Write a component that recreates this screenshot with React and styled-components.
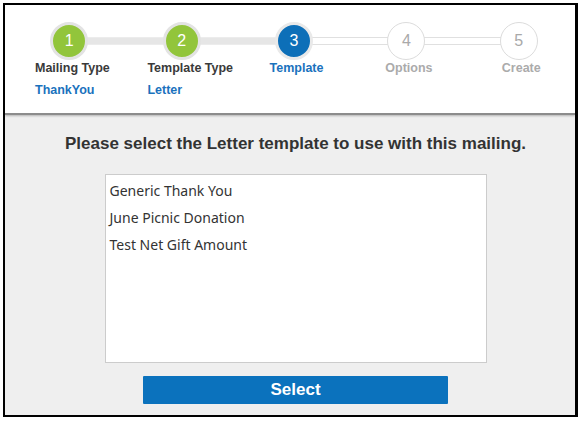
import React from "react";
import styled, { createGlobalStyle, css } from "styled-components";

const GlobalStyle = createGlobalStyle`
  html, body {
    margin: 0;
    padding: 0;
    background: #ffffff;
  }
  body {
    font-family: "Liberation Sans", Arial, sans-serif;
  }
`;

const Frame = styled.div`
  margin: 3px 0 0 3px;
  width: 575px;
  height: 414px;
  box-sizing: border-box;
  border: 2px solid #000;
  border-right-width: 3px;
  display: flex;
  flex-direction: column;
  background: #efefef;
`;

const Header = styled.div`
  height: 110px;
  flex-shrink: 0;
  box-sizing: border-box;
  padding: 17px 0 0 8px;
  background: #fff;
  display: grid;
  grid-template-columns: repeat(5, 1fr);
  border-bottom: 2px solid #8c8c8c;
  box-shadow: 0 1px 2px rgba(0, 0, 0, 0.25);
  position: relative;
  z-index: 1;
`;

const Step = styled.div`
  position: relative;
  display: flex;
  flex-direction: column;
  align-items: center;
`;

const Connector = styled.span`
  position: absolute;
  top: 15px;
  right: 50%;
  width: 100%;
  height: 8px;
  box-sizing: border-box;
  ${(p) =>
    p.$done
      ? css`
          background: #e6e6e6;
          border-top: 1px solid #ececec;
          border-bottom: 1px solid #ececec;
        `
      : css`
          background: #fff;
          border-top: 1px solid #e0e0e0;
          border-bottom: 1px solid #e0e0e0;
        `}
`;

const circleColors = {
  done: css`
    background: #92c53b;
    border: 3px solid #e3e3e3;
    color: #fff;
  `,
  current: css`
    background: #0d6fb8;
    border: 3px solid #e9e9e9;
    color: #fff;
  `,
  todo: css`
    background: #fff;
    border: 1.5px solid #dcdcdc;
    color: #a9a9a9;
  `,
};

const Circle = styled.div`
  position: relative;
  z-index: 1;
  width: 38px;
  height: 38px;
  box-sizing: border-box;
  border-radius: 50%;
  display: flex;
  align-items: center;
  justify-content: center;
  font-size: 16px;
  ${(p) => circleColors[p.$state]}
`;

// captions with a chosen value sit left-aligned under the circle
const Caption = styled.div`
  align-self: ${(p) => (p.$left ? "flex-start" : "center")};
  margin-left: ${(p) => (p.$left ? "22px" : "5px")};
  display: flex;
  flex-direction: column;
  align-items: flex-start;
`;

const Label = styled.div`
  font-size: 12.5px;
  font-weight: bold;
  line-height: 16px;
  white-space: nowrap;
  color: ${(p) =>
    p.$state === "current" ? "#1a72bd" : p.$state === "todo" ? "#ababab" : "#3a3a3a"};
`;

const Value = styled.div`
  margin-top: 6px;
  font-size: 12.5px;
  font-weight: bold;
  line-height: 16px;
  color: #1a72bd;
`;

const Content = styled.div`
  flex: 1;
  display: flex;
  flex-direction: column;
  align-items: center;
  padding: 19px 0 0 11px;
`;

const Heading = styled.h2`
  margin: 0;
  font-size: 17px;
  line-height: 20px;
  font-weight: bold;
  color: #333;
`;

const ListBox = styled.ul`
  list-style: none;
  margin: 20px 0 0;
  padding: 2px 4px;
  width: 382px;
  height: 189px;
  box-sizing: border-box;
  background: #fff;
  border: 1px solid #cccccc;
`;

const Item = styled.li`
  font-family: "Noto Sans", "Open Sans", sans-serif;
  font-size: 14px;
  line-height: 27px;
  color: #333;
`;

const SelectButton = styled.button`
  margin-top: 13px;
  width: 305px;
  height: 28px;
  border: none;
  border-radius: 1px;
  background: #0b72bd;
  color: #fff;
  font-family: "Liberation Sans", Arial, sans-serif;
  font-size: 17px;
  font-weight: bold;
  cursor: pointer;
`;

const steps = [
  { n: 1, label: "Mailing Type", value: "ThankYou", state: "done" },
  { n: 2, label: "Template Type", value: "Letter", state: "done" },
  { n: 3, label: "Template", state: "current" },
  { n: 4, label: "Options", state: "todo" },
  { n: 5, label: "Create", state: "todo" },
];

const templates = ["Generic Thank You", "June Picnic Donation", "Test Net Gift Amount"];

export default function App() {
  return (
    <>
      <GlobalStyle />
      <Frame>
        <Header>
          {steps.map((s, i) => (
            <Step key={s.n}>
              {i > 0 && <Connector $done={s.state !== "todo"} />}
              <Circle $state={s.state}>{s.n}</Circle>
              <Caption $left={!!s.value}>
                <Label $state={s.state}>{s.label}</Label>
                {s.value && <Value>{s.value}</Value>}
              </Caption>
            </Step>
          ))}
        </Header>
        <Content>
          <Heading>Please select the Letter template to use with this mailing.</Heading>
          <ListBox>
            {templates.map((t) => (
              <Item key={t}>{t}</Item>
            ))}
          </ListBox>
          <SelectButton>Select</SelectButton>
        </Content>
      </Frame>
    </>
  );
}
